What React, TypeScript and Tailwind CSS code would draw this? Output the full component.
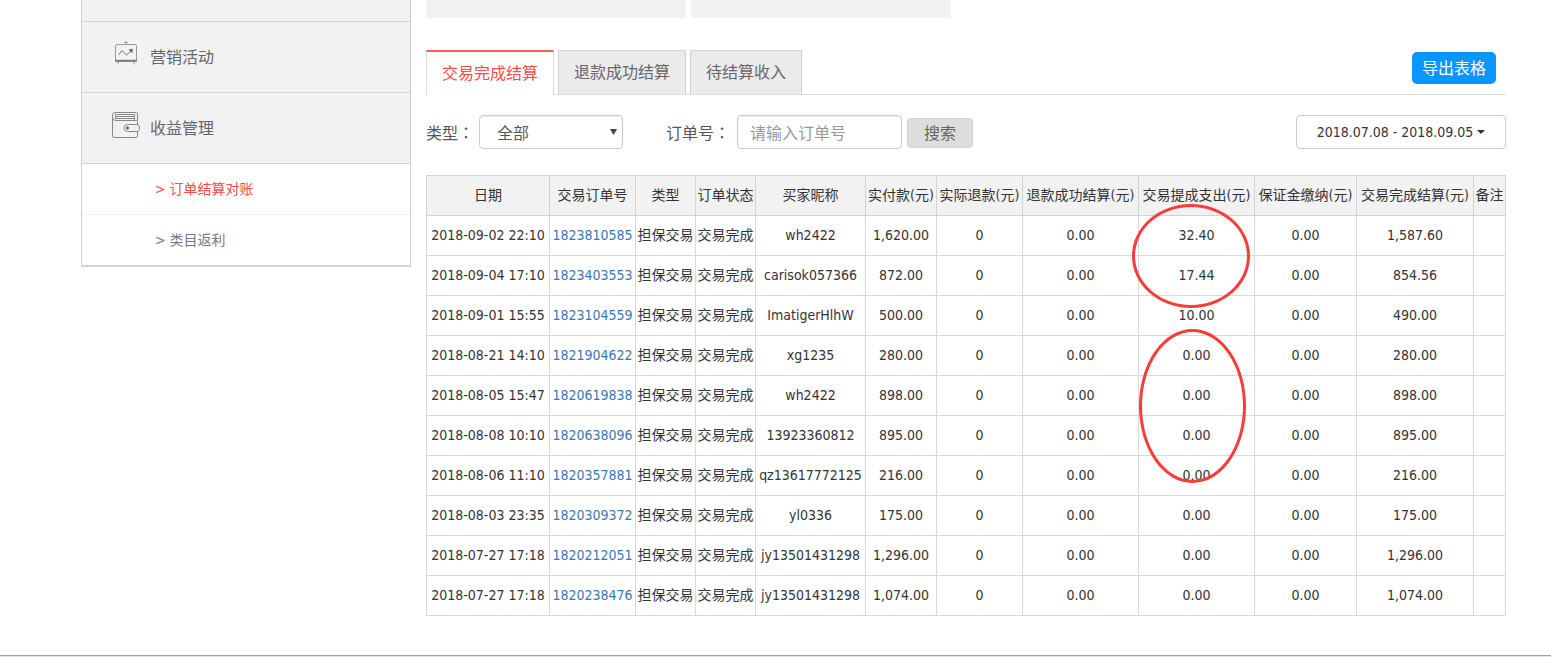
import React from "react";

type Column = { title: string; width: string };

const columns: Column[] = [
  { title: "日期", width: "w-[123px]" },
  { title: "交易订单号", width: "w-[86px]" },
  { title: "类型", width: "w-[60px]" },
  { title: "订单状态", width: "w-[60px]" },
  { title: "买家昵称", width: "w-[110px]" },
  { title: "实付款(元)", width: "w-[71px]" },
  { title: "实际退款(元)", width: "w-[86px]" },
  { title: "退款成功结算(元)", width: "w-[116px]" },
  { title: "交易提成支出(元)", width: "w-[116px]" },
  { title: "保证金缴纳(元)", width: "w-[102px]" },
  { title: "交易完成结算(元)", width: "w-[117px]" },
  { title: "备注", width: "w-[32px]" },
];

type Order = {
  date: string;
  id: string;
  buyer: string;
  paid: string;
  commission: string;
  settled: string;
};

const orders: Order[] = [
  { date: "2018-09-02 22:10", id: "1823810585", buyer: "wh2422", paid: "1,620.00", commission: "32.40", settled: "1,587.60" },
  { date: "2018-09-04 17:10", id: "1823403553", buyer: "carisok057366", paid: "872.00", commission: "17.44", settled: "854.56" },
  { date: "2018-09-01 15:55", id: "1823104559", buyer: "ImatigerHlhW", paid: "500.00", commission: "10.00", settled: "490.00" },
  { date: "2018-08-21 14:10", id: "1821904622", buyer: "xg1235", paid: "280.00", commission: "0.00", settled: "280.00" },
  { date: "2018-08-05 15:47", id: "1820619838", buyer: "wh2422", paid: "898.00", commission: "0.00", settled: "898.00" },
  { date: "2018-08-08 10:10", id: "1820638096", buyer: "13923360812", paid: "895.00", commission: "0.00", settled: "895.00" },
  { date: "2018-08-06 11:10", id: "1820357881", buyer: "qz13617772125", paid: "216.00", commission: "0.00", settled: "216.00" },
  { date: "2018-08-03 23:35", id: "1820309372", buyer: "yl0336", paid: "175.00", commission: "0.00", settled: "175.00" },
  { date: "2018-07-27 17:18", id: "1820212051", buyer: "jy13501431298", paid: "1,296.00", commission: "0.00", settled: "1,296.00" },
  { date: "2018-07-27 17:18", id: "1820238476", buyer: "jy13501431298", paid: "1,074.00", commission: "0.00", settled: "1,074.00" },
];

function BoardIcon() {
  return (
    <svg width="28" height="28" viewBox="0 0 28 28" fill="none" stroke="#999" aria-hidden="true">
      <path d="M12.500 2.500h3" stroke="#888" strokeWidth="1.500" />
      <rect x="3.500" y="4.500" width="21" height="17" rx="1.500" />
      <path d="M3 20.700h22" stroke="#86757a" strokeWidth="1.800" />
      <path d="M6.500 22l-1 2.500M21.500 22l1 2.500" />
      <path d="M6.500 15l3.500-4.500 4.500 4.500 5-4.500" stroke="#777" />
      <path d="M16.500 9.500l4.500-.8-.8 4.500z" fill="#666" stroke="none" />
    </svg>
  );
}

function WalletIcon() {
  return (
    <svg width="28" height="28" viewBox="0 0 28 28" fill="none" stroke="#888" aria-hidden="true">
      <path d="M25.500 14V10.500Q25.500 9.500 24.500 9.500H3.500Q.5 9.500.5 6.500V4Q.5 1.500 3 1.500H24.500Q25.500 1.500 25.500 2.500V9.500M.5 6V24.500Q.5 26.500 2.500 26.500H23.500Q25.500 26.500 25.500 24.500V20" />
      <path d="M3.500 8.500V3.500H22.500V9M4 5.500h18M4 7.500h18" />
      <path d="M26 13.500H15.500a3.500 3.500 0 0 0 0 7H26Q27.500 19 27.500 17T26 13.500z" />
      <circle cx="15.500" cy="17" r="1.300" fill="#555" stroke="#777" />
    </svg>
  );
}

function MenuItem({ icon, label }: { icon: React.ReactNode; label: string }) {
  return (
    <a href="#" className="flex h-[71px] items-center gap-2.5 border-b border-[#d2d2d2] bg-[#f2f2f2] pt-0.5 pl-[30px] text-base text-[#666]">
      <span className="pb-2">{icon}</span>
      {label}
    </a>
  );
}

function Sidebar() {
  return (
    <nav className="w-[330px] shrink-0 self-start border-x border-b-2 border-[#d2d2d2]">
      <div className="h-[22px] border-b border-[#d2d2d2] bg-[#f2f2f2]" />
      <MenuItem icon={<BoardIcon />} label="营销活动" />
      <MenuItem icon={<WalletIcon />} label="收益管理" />
      <a href="#" className="flex h-[51px] items-center border-b border-[#f2f2f2] pl-[73px] text-[#ff4a4a]">
        &gt; 订单结算对账
      </a>
      <a href="#" className="flex h-[50px] items-center pl-[73px] text-[#777]">
        &gt; 类目返利
      </a>
    </nav>
  );
}

function Tabs() {
  return (
    <div className="flex h-[45px] items-start border-b border-[#dcdcdc]">
      <div role="tablist" className="flex gap-1 text-base">
        <button role="tab" aria-selected="true" className="h-[45px] border-x border-t-2 border-x-[#dcdcdc] border-t-[#ff5f59] bg-white px-[15px] text-[#ff4a45]">
          交易完成结算
        </button>
        <button role="tab" aria-selected="false" className="h-11 border-x border-t border-[#d2d2d2] bg-[#ebebeb] px-[15px] text-[#666]">
          退款成功结算
        </button>
        <button role="tab" aria-selected="false" className="h-11 border-x border-t border-[#d2d2d2] bg-[#ebebeb] px-[15px] text-[#666]">
          待结算收入
        </button>
      </div>
      <button className="mt-0.5 mr-2.5 ml-auto h-8 rounded-[5px] bg-[#0a96ff] px-2.5 pt-0.5 text-base text-white">导出表格</button>
    </div>
  );
}

function Colon() {
  return <span className="font-['Noto_Sans_CJK_TC',sans-serif]">：</span>;
}

function Filters() {
  return (
    <form className="mt-5 flex items-center text-base text-[#555]">
      <label htmlFor="type" className="pt-0.5">
        类型
        <Colon />
      </label>
      <div className="relative ml-[5px]">
        <select id="type" className="block h-[34px] w-36 appearance-none rounded border border-[#ccc] bg-white pt-1 pl-[17px] text-[#555] shadow-[inset_0_1px_1px_rgba(0,0,0,0.075)]">
          <option>全部</option>
        </select>
        <svg className="pointer-events-none absolute top-3.5 right-1.5" width="7" height="6" viewBox="0 0 7 6" aria-hidden="true">
          <path d="M0 0h7L3.500 6z" fill="#444" />
        </svg>
      </div>
      <label htmlFor="order" className="ml-[43px] pt-0.5">
        订单号
        <Colon />
      </label>
      <input id="order" placeholder="请输入订单号" className="ml-[7px] h-[34px] w-[165px] rounded border border-[#ccc] px-3 pt-0.5 shadow-[inset_0_1px_1px_rgba(0,0,0,0.075)] placeholder:text-[#999]" />
      <button type="button" className="mt-0.5 ml-[5px] h-[30px] w-[66px] rounded border border-[#d2d2d2] bg-[#ddd] pt-0.5 text-[#666]">
        搜索
      </button>
      <button type="button" className="ml-auto flex h-[34px] w-[210px] items-center justify-center gap-1 rounded border border-[#ccc] bg-white text-sm text-[#333]">
        2018.07.08 - 2018.09.05
        <svg width="8" height="4" viewBox="0 0 8 4" aria-hidden="true">
          <path d="M0 0h8L4 4z" fill="#333" />
        </svg>
      </button>
    </form>
  );
}

function OrdersTable() {
  return (
    <div className="relative mt-[26px]">
      <table className="w-full table-fixed border-collapse text-center whitespace-nowrap text-[#333] [&_td]:border [&_td]:border-[#d9d9d9] [&_td]:pb-0.5">
        <thead>
          <tr className="h-10 bg-[#f2f2f2]">
            {columns.map((column) => (
              <th key={column.title} className={`border border-[#d2d2d2] px-0 pt-0 pb-0.5 font-normal ${column.width}`}>
                {column.title}
              </th>
            ))}
          </tr>
        </thead>
        <tbody>
          {orders.map((order) => (
            <tr key={order.id} className="h-10">
              <td>{order.date}</td>
              <td>
                <a href="#" className="text-[#337ab7]">
                  {order.id}
                </a>
              </td>
              <td>担保交易</td>
              <td>交易完成</td>
              <td>{order.buyer}</td>
              <td>{order.paid}</td>
              <td>0</td>
              <td>0.00</td>
              <td>{order.commission}</td>
              <td>0.00</td>
              <td>{order.settled}</td>
              <td />
            </tr>
          ))}
        </tbody>
      </table>
      <div className="pointer-events-none absolute top-[29px] left-[65.4%] h-[104px] w-[118px] rounded-[50%] border-3 border-[#fa3c38]" />
      <div className="pointer-events-none absolute top-[154px] left-[66%] h-[154px] w-[107px] rounded-[50%] border-3 border-[#fa3c38]" />
    </div>
  );
}

export default function App() {
  return (
    <div className="bg-white font-['DejaVu_Sans_Condensed','Noto_Sans_CJK_SC',sans-serif] text-sm">
      <div className="flex gap-[15px] pr-[45px] pb-[39px] pl-[81px]">
        <Sidebar />
        <main className="min-w-0 flex-1">
          <div className="mb-8 flex gap-[5px]">
            <div className="h-[18px] w-[260px] bg-[#f2f2f2]" />
            <div className="h-[18px] w-[260px] bg-[#f2f2f2]" />
          </div>
          <Tabs />
          <Filters />
          <OrdersTable />
        </main>
      </div>
      <div className="h-0.5 border-t border-[#a0a0b0] bg-[#e0e4ee]" />
    </div>
  );
}
